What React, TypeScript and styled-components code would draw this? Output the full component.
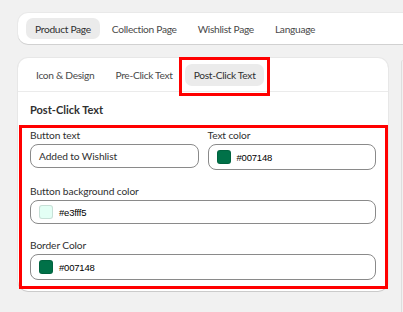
import React from 'react';
import styled, { createGlobalStyle } from 'styled-components';

const GlobalStyle = createGlobalStyle`
  html, body {
    margin: 0;
    padding: 0;
    background: #f1f1f1;
    overflow: hidden;
  }
  body {
    font-family: 'Lato', 'Noto Sans', sans-serif;
    color: #303030;
  }
`;

const Page = styled.div`
  width: 403px;
  height: 312px;
  box-sizing: border-box;
  overflow: hidden;
  padding: 13px 0 0 18px;
`;

const TopBar = styled.div`
  width: 420px;
  height: 31px;
  box-sizing: border-box;
  display: flex;
  align-items: center;
  gap: 3px;
  padding: 0 8px;
  background: #fff;
  border-radius: 10px;
  box-shadow: 0 1px 0 rgba(0, 0, 0, 0.1), 0 0 0 1px rgba(0, 0, 0, 0.03);
`;

const Tab = styled.div<{ $active?: boolean }>`
  height: 21px;
  display: flex;
  align-items: center;
  padding: 0 9px;
  border-radius: 7px;
  font-size: 10.2px;
  letter-spacing: -0.3px;
  color: ${({ $active }) => ($active ? '#303030' : '#4a4a4a')};
  background: ${({ $active }) => ($active ? '#ebebeb' : 'transparent')};
  white-space: nowrap;
`;

const Row = styled.div`
  display: flex;
  gap: 13px;
  margin-top: 14px;
  align-items: flex-start;
`;

const Card = styled.div`
  width: 370px;
  flex-shrink: 0;
  background: #fff;
  border-radius: 10px;
  padding-bottom: 2px;
  box-shadow: 0 1px 0 rgba(0, 0, 0, 0.12), 0 0 0 1px rgba(0, 0, 0, 0.04);
`;

const SideCard = styled.div`
  width: 40px;
  height: 260px;
  margin-top: 2px;
  background: #f1f1f1;
  border-left: 1px solid #dedede;
  border-top: 1px solid #e6e6e6;
  border-top-left-radius: 6px;
`;

const CardTabs = styled.div`
  display: flex;
  gap: 3px;
  padding: 6px 9px 5px;
  border-bottom: 1px solid #ebebeb;
`;

const CardTab = styled(Tab)`
  position: relative;
  height: 22px;
`;

const Highlight = styled.span`
  position: absolute;
  top: -7px;
  bottom: -10px;
  left: -6px;
  right: -6px;
  border: 3px solid #ff0000;
  pointer-events: none;
`;

const SectionTitle = styled.h3`
  margin: 0;
  padding: 10px 12px 7px;
  font-size: 11px;
  line-height: 16px;
  font-weight: 700;
  color: #303030;
`;

const FormBox = styled.div`
  margin-left: 1px;
  border: 3px solid #ff0000;
  padding: 0 9px 6px 8px;
  display: grid;
  grid-template-columns: 1fr 1fr;
  column-gap: 9px;
  row-gap: 14px;
`;

const Field = styled.div<{ $wide?: boolean }>`
  display: flex;
  flex-direction: column;
  gap: 2px;
  grid-column: ${({ $wide }) => ($wide ? '1 / -1' : 'auto')};
`;

const Label = styled.label`
  font-size: 10.2px;
  letter-spacing: -0.1px;
  line-height: 14px;
  color: #303030;
`;

const Input = styled.div<{ $tall?: boolean }>`
  height: ${({ $tall }) => ($tall ? '26px' : '24px')};
  box-sizing: border-box;
  display: flex;
  align-items: center;
  gap: 6px;
  padding: 0 8px;
  border: 1px solid #8a8a8a;
  border-radius: 8px;
  font-size: 10.2px;
  letter-spacing: -0.1px;
  color: #303030;
`;

const Swatch = styled.span<{ $color: string }>`
  width: 14px;
  height: 14px;
  box-sizing: border-box;
  border-radius: 3px;
  background: ${({ $color }) => $color};
  border: 1px solid rgba(0, 0, 0, 0.12);
  flex-shrink: 0;
`;

const Hex = styled.span`
  font-family: 'Liberation Sans', Arial, sans-serif;
  font-size: 9.5px;
  letter-spacing: -0.2px;
  color: #000;
`;

const topTabs = ['Product Page', 'Collection Page', 'Wishlist Page', 'Language'];
const subTabs = ['Icon & Design', 'Pre-Click Text', 'Post-Click Text'];

const ColorInput: React.FC<{ value: string; tall?: boolean }> = ({ value, tall }) => (
  <Input $tall={tall}>
    <Swatch $color={value} />
    <Hex>{value}</Hex>
  </Input>
);

const App: React.FC = () => (
  <>
    <GlobalStyle />
    <Page>
      <TopBar>
        {topTabs.map((t, i) => (
          <Tab key={t} $active={i === 0}>
            {t}
          </Tab>
        ))}
      </TopBar>
      <Row>
        <Card>
          <CardTabs>
            {subTabs.map((t, i) => (
              <CardTab key={t} $active={i === 2}>
                {t}
                {i === 2 && <Highlight />}
              </CardTab>
            ))}
          </CardTabs>
          <SectionTitle>Post-Click Text</SectionTitle>
          <FormBox>
            <Field>
              <Label>Button text</Label>
              <Input>Added to Wishlist</Input>
            </Field>
            <Field>
              <Label>Text color</Label>
              <ColorInput value="#007148" tall />
            </Field>
            <Field $wide>
              <Label>Button background color</Label>
              <ColorInput value="#e3fff5" />
            </Field>
            <Field $wide>
              <Label>Border Color</Label>
              <ColorInput value="#007148" tall />
            </Field>
          </FormBox>
        </Card>
        <SideCard />
      </Row>
    </Page>
  </>
);

export default App;
